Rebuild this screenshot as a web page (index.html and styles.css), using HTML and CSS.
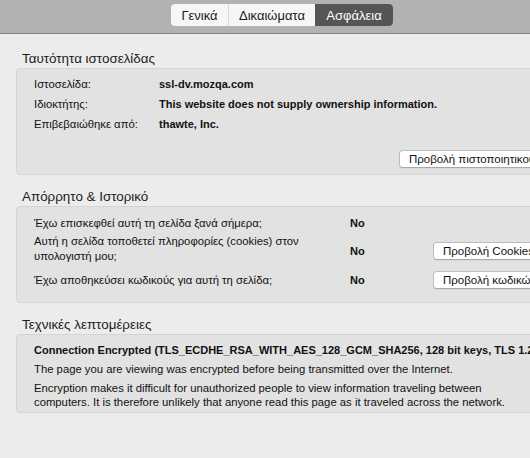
FILE: index.html
```html
<!DOCTYPE html>
<html lang="el">
<head>
<meta charset="utf-8">
<title>Ασφάλεια</title>
<link rel="stylesheet" href="styles.css">
</head>
<body>
<div class="window">
  <div class="toolbar">
    <div class="segmented">
      <span class="seg">Γενικά</span>
      <span class="seg">Δικαιώματα</span>
      <span class="seg active">Ασφάλεια</span>
    </div>
  </div>

  <div class="content">
    <h2 class="section-title first">Ταυτότητα ιστοσελίδας</h2>
    <div class="box identity">
      <div class="kv">
        <span class="key">Ιστοσελίδα:</span><span class="val">ssl-dv.mozqa.com</span>
        <span class="key">Ιδιοκτήτης:</span><span class="val">This website does not supply ownership information.</span>
        <span class="key">Επιβεβαιώθηκε από:</span><span class="val">thawte, Inc.</span>
      </div>
      <div class="btn-row"><button class="btn cert">Προβολή πιστοποιητικού</button></div>
    </div>

    <h2 class="section-title">Απόρρητο &amp; Ιστορικό</h2>
    <div class="box privacy">
      <span class="q">Έχω επισκεφθεί αυτή τη σελίδα ξανά σήμερα;</span>
      <span class="ans">No</span>
      <span class="act"></span>

      <span class="q">Αυτή η σελίδα τοποθετεί πληροφορίες (cookies) στον υπολογιστή μου;</span>
      <span class="ans low">No</span>
      <span class="act low"><button class="btn">Προβολή Cookies</button></span>

      <span class="q">Έχω αποθηκεύσει κωδικούς για αυτή τη σελίδα;</span>
      <span class="ans">No</span>
      <span class="act"><button class="btn">Προβολή κωδικών</button></span>
    </div>

    <h2 class="section-title">Τεχνικές λεπτομέρειες</h2>
    <div class="box tech">
      <p class="strong">Connection Encrypted (TLS_ECDHE_RSA_WITH_AES_128_GCM_SHA256, 128 bit keys, TLS 1.2)</p>
      <p>The page you are viewing was encrypted before being transmitted over the Internet.</p>
      <p>Encryption makes it difficult for unauthorized people to view information traveling between computers. It is therefore unlikely that anyone read this page as it traveled across the network.</p>
    </div>
  </div>
</div>
</body>
</html>
```

FILE: styles.css
```css
html, body {
  margin: 0;
  padding: 0;
  overflow: hidden;
  background: #ececec;
}

body {
  font-family: "Liberation Sans", Arial, sans-serif;
  font-size: 11.3px;
  color: #111;
}

.window {
  width: 600px;
  height: 458px;
  background: #ececec;
}

.toolbar {
  height: 33px;
  background: #b2b2b2;
  border-bottom: 1px solid #7e7e7e;
  display: flex;
  align-items: flex-start;
  padding-left: 171px;
}

.segmented {
  margin-top: 4px;
  display: flex;
  height: 22px;
  border-radius: 4px;
  overflow: hidden;
  background: #f6f6f6;
}

.seg {
  display: flex;
  align-items: center;
  justify-content: center;
  font-size: 13px;
  color: #1a1a1a;
}

.seg:nth-child(1) { width: 57px; border-right: 1px solid #d8d8d8; }
.seg:nth-child(2) { width: 86px; }
.seg.active {
  width: 78px;
  background: #555555;
  color: #fff;
}

.content {
  padding: 0 0 0 16px;
}

.section-title {
  margin: 0 0 1px 6px;
  padding-top: 14px;
  font-size: 13.4px;
  line-height: 16px;
  font-weight: normal;
  color: #1c1c1c;
}

.section-title.first {
  padding-top: 17px;
}

.box {
  background: #e2e2e2;
  border: 1px solid #d4d4d4;
  border-radius: 4px;
  padding-left: 17px;
}

.identity {
  padding-top: 5px;
  padding-bottom: 6px;
}

.kv {
  display: grid;
  grid-template-columns: 125px 1fr;
  grid-auto-rows: 20px;
  align-items: center;
}

.val {
  font-weight: bold;
  font-size: 11px;
}

.btn-row {
  margin-top: 16px;
  padding-left: 365px;
  display: flex;
}

.btn {
  font-family: "Liberation Sans", Arial, sans-serif;
  font-size: 11.5px;
  color: #111;
  background: #ffffff;
  border: 1px solid #bdbdbd;
  border-bottom-color: #a8a8a8;
  border-radius: 4px;
  height: 18px;
  line-height: 16px;
  padding: 0 9px;
  white-space: nowrap;
  box-shadow: 0 1px 0 rgba(0, 0, 0, 0.04);
}

.cert {
  width: 160px;
  text-align: left;
}

.privacy {
  display: grid;
  grid-template-columns: 316px 83px 1fr;
  grid-template-rows: 16px 35px 28px;
  align-items: center;
  padding-top: 8px;
  padding-bottom: 8px;
}

.q {
  line-height: 15px;
  padding-right: 40px;
}

.privacy .q:nth-of-type(2) {
  padding-bottom: 5px;
}

.ans {
  font-weight: bold;
  font-size: 11px;
}

.ans.low, .act.low {
  padding-top: 4px;
}

.act .btn {
  width: 125px;
  text-align: left;
}

.tech {
  padding-top: 8px;
  padding-bottom: 3px;
}

.tech p {
  margin: 5px 0 0 0;
  line-height: 14px;
  width: 478px;
}

.tech p.strong {
  margin-top: 0;
  font-weight: bold;
  font-size: 11px;
  white-space: nowrap;
  width: auto;
}
```
